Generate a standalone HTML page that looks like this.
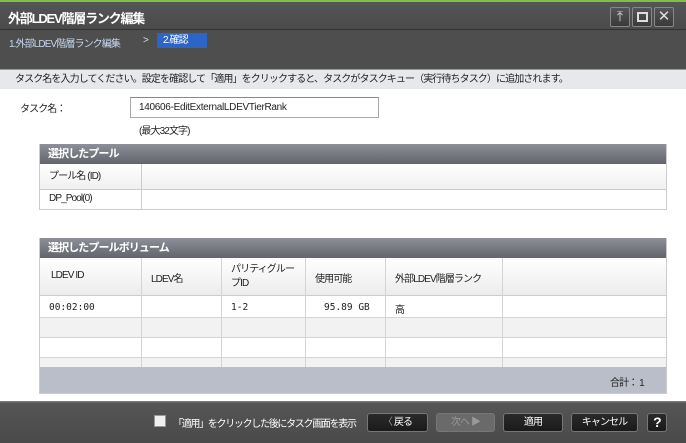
<!DOCTYPE html>
<html><head><meta charset="utf-8"><style>
*{margin:0;padding:0;box-sizing:border-box}
body{width:686px;height:443px;overflow:hidden;background:#fff;font-family:"Liberation Sans","Noto Sans CJK JP",sans-serif;font-size:10px;letter-spacing:-0.9px;color:#222;position:relative;white-space:nowrap}
.a{position:absolute}
.wb{position:absolute;top:7px;width:20px;height:20px;border:1px solid #888;background:linear-gradient(#555,#3a3a3a);color:#ddd;font-size:14px;text-align:center;line-height:17px;border-radius:2px;letter-spacing:0}
.th{background:linear-gradient(#8e9099,#62646c);color:#fff;font-weight:bold;font-size:11px;padding-left:8px;line-height:20px}
.btn{position:absolute;top:413px;height:19px;border:1px solid #777;border-radius:3px;background:linear-gradient(#2a2a2a,#1a1a1a);color:#fff;text-align:center;line-height:17px;font-size:10px}
.vl{position:absolute;width:1px;background:#d4d4d4}
.hl{position:absolute;height:1px;background:#d4d4d4}
.m{font-family:'DejaVu Sans Mono','Liberation Mono',monospace;font-size:9.5px;letter-spacing:0}
</style></head><body>
<div class="a" style="left:0;top:0;width:686px;height:2px;background:#7cc242"></div>
<div class="a" style="left:0;top:2px;width:686px;height:67px;background:linear-gradient(#555 0,#4a4a4a 28px,#4e4e4e 29px,#4e4e4e 100%)"></div>
<div class="a" style="left:0;top:29px;width:686px;height:1px;background:#333"></div>
<div class="a" style="left:8px;top:8px;color:#fff;font-weight:bold;font-size:13px;letter-spacing:-1.2px">外部LDEV階層ランク編集</div>
<div class="wb" style="left:610px">⤒</div>
<div class="wb" style="left:632px"><div style="margin:4px auto;width:11px;height:10px;border:2px solid #ddd"></div></div>
<div class="wb" style="left:654px;font-size:15px">✕</div>
<div class="a" style="left:9px;top:35px;color:#c8d8f0">1.外部LDEV階層ランク編集</div>
<div class="a" style="left:143px;top:35px;color:#ddd">&gt;</div>
<div class="a" style="left:157px;top:33px;width:50px;height:15px;background:#2c64c8;color:#fff;padding-left:6px;line-height:15px">2.確認</div>
<div class="a" style="left:0;top:69px;width:686px;height:20px;background:#e6e8ec;border-top:1px solid #999;padding-left:15px;line-height:19px">タスク名を入力してください。設定を確認して「適用」をクリックすると、タスクがタスクキュー（実行待ちタスク）に追加されます。</div>
<div class="a" style="left:20px;top:100px">タスク名：</div>
<div class="a" style="left:130px;top:97px;width:249px;height:21px;border:1px solid #aaa;border-top-color:#888;padding-left:8px;line-height:19px;letter-spacing:-0.3px">140606-EditExternalLDEVTierRank</div>
<div class="a" style="left:139px;top:122px">(最大32文字)</div>

<div class="a" style="left:39px;top:144px;width:628px;height:66px;border:1px solid #ccc;border-top:none">
 <div class="th">選択したプール</div>
 <div style="height:26px;background:linear-gradient(#fff,#f0f0f0);border-bottom:1px solid #ccc;line-height:26px;padding-left:9px">プール名 (ID)</div>
 <div style="line-height:18px;padding-left:9px">DP_Pool(0)</div>
 <div class="vl" style="left:101px;top:20px;height:46px;background:#ccc"></div>
</div>

<div class="a" style="left:39px;top:238px;width:628px;height:156px;border:1px solid #ccc;border-top:none;background:#fff">
 <div class="th">選択したプールボリューム</div>
 <div class="a" style="top:20px;left:0;width:626px;height:38px;background:linear-gradient(#fff,#ececec);border-bottom:1px solid #ccc"></div>
 <div class="a" style="top:80px;left:0;width:626px;height:20px;background:#f2f2f2"></div>
 <div class="a" style="top:120px;left:0;width:626px;height:9px;background:#f2f2f2"></div>
 <div class="hl" style="top:79px;left:0;width:626px"></div>
 <div class="hl" style="top:99px;left:0;width:626px"></div>
 <div class="hl" style="top:119px;left:0;width:626px"></div>
 <div class="vl" style="left:101px;top:20px;height:109px"></div>
 <div class="vl" style="left:181px;top:20px;height:109px"></div>
 <div class="vl" style="left:265px;top:20px;height:109px"></div>
 <div class="vl" style="left:345px;top:20px;height:109px"></div>
 <div class="vl" style="left:462px;top:20px;height:109px"></div>
 <div class="a" style="left:11px;top:32px">LDEV ID</div>
 <div class="a" style="left:111px;top:32px">LDEV名</div>
 <div class="a" style="left:191px;top:25px;line-height:14px">パリティグルー<br>プID</div>
 <div class="a" style="left:275px;top:32px">使用可能</div>
 <div class="a" style="left:355px;top:32px">外部LDEV階層ランク</div>
 <div class="a m" style="left:9px;top:64px">00:02:00</div>
 <div class="a m" style="left:191px;top:64px">1-2</div>
 <div class="a m" style="left:284px;top:64px">95.89 GB</div>
 <div class="a" style="left:355px;top:63px">高</div>
 <div class="a" style="top:129px;left:0;width:626px;height:26px;background:#b9bec9"></div>
 <div class="a" style="left:570px;top:136px">合計：&nbsp;1</div>
</div>

<div class="a" style="left:0;top:401px;width:686px;height:42px;background:linear-gradient(#777 0,#777 1px,#555 2px,#4a4a4a 100%)"></div>
<div class="a" style="left:154px;top:415px;width:12px;height:12px;background:#f0f0f0;border:1px solid #999"></div>
<div class="a" style="left:173px;top:415px;color:#fff;letter-spacing:-1.3px">「適用」をクリックした後にタスク画面を表示</div>
<div class="btn" style="left:367px;width:61px"><span style="color:#999">〈</span> 戻る</div>
<div class="btn" style="left:436px;width:59px;background:#6a6a6a;border-color:#777;color:#9a9a9a">次へ ▶</div>
<div class="btn" style="left:503px;width:60px">適用</div>
<div class="btn" style="left:571px;width:67px">キャンセル</div>
<div class="btn" style="left:647px;width:20px;font-weight:bold;font-size:14px">?</div>
</body></html>
